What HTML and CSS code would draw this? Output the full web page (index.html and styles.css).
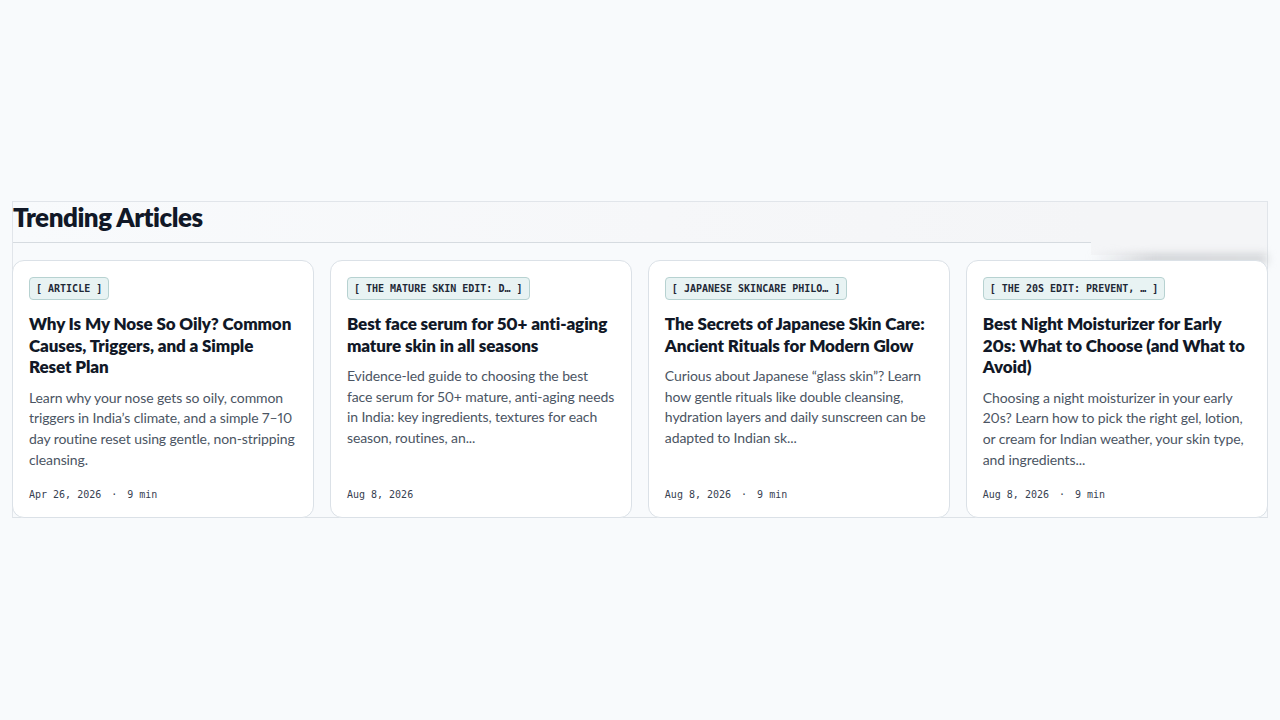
FILE: index.html
```html
<!DOCTYPE html>
<html lang="en">
<head>
<meta charset="utf-8">
<title>Trending Articles</title>
<link rel="stylesheet" href="styles.css">
</head>
<body>
<section class="trending">
  <header class="trending-head">
    <h2 class="trending-title">Trending Articles</h2>
  </header>
  <div class="edge-fade" aria-hidden="true"></div>
  <div class="card-row">
    <article class="card">
      <span class="chip">[ ARTICLE ]</span>
      <h3 class="card-title">Why Is My Nose So Oily? Common Causes, Triggers, and a Simple Reset Plan</h3>
      <p class="card-desc">Learn why your nose gets so oily, common triggers in India’s climate, and a simple 7–10 day routine reset using gentle, non-stripping cleansing.</p>
      <div class="card-meta"><span>Apr 26, 2026</span><span class="sep">·</span><span>9 min</span></div>
    </article>
    <article class="card">
      <span class="chip">[ THE MATURE SKIN EDIT: D… ]</span>
      <h3 class="card-title">Best face serum for 50+ anti-aging mature skin in all seasons</h3>
      <p class="card-desc">Evidence-led guide to choosing the best face serum for 50+ mature, anti-aging needs in India: key ingredients, textures for each season, routines, an...</p>
      <div class="card-meta"><span>Aug 8, 2026</span></div>
    </article>
    <article class="card">
      <span class="chip">[ JAPANESE SKINCARE PHILO… ]</span>
      <h3 class="card-title">The Secrets of Japanese Skin Care: Ancient Rituals for Modern Glow</h3>
      <p class="card-desc">Curious about Japanese “glass skin”? Learn how gentle rituals like double cleansing, hydration layers and daily sunscreen can be adapted to Indian sk...</p>
      <div class="card-meta"><span>Aug 8, 2026</span><span class="sep">·</span><span>9 min</span></div>
    </article>
    <article class="card">
      <span class="chip">[ THE 20S EDIT: PREVENT, … ]</span>
      <h3 class="card-title">Best Night Moisturizer for Early 20s: What to Choose (and What to Avoid)</h3>
      <p class="card-desc">Choosing a night moisturizer in your early 20s? Learn how to pick the right gel, lotion, or cream for Indian weather, your skin type, and ingredients...</p>
      <div class="card-meta"><span>Aug 8, 2026</span><span class="sep">·</span><span>9 min</span></div>
    </article>
  </div>
</section>
</body>
</html>
```
FILE: styles.css
```css
* {
  box-sizing: border-box;
}

body {
  margin: 0;
  padding: 201px 12px 0;
  background: #f8fafc;
  font-family: Lato, "Noto Sans", sans-serif;
  color: #111827;
}

.trending {
  position: relative;
  border: 1px solid #e1e5ea;
  border-bottom-color: #dde2e7;
}

.trending-head {
  margin-right: 175px;
  height: 41px;
  border-bottom: 1px solid #d6dbe0;
  background: linear-gradient(90deg, #f8fafc 0%, #f6f7f9 60%, #f4f5f7 100%);
}

.trending-title {
  margin: 0;
  font-size: 26px;
  font-weight: 800;
  letter-spacing: -0.5px;
  line-height: 31px;
  color: #111827;
}

.edge-fade {
  position: absolute;
  top: 0;
  right: 0;
  width: 176px;
  height: 53px;
  background: #f4f5f7;
  pointer-events: none;
}

.edge-fade::after {
  content: "";
  position: absolute;
  left: 0;
  right: 0;
  top: 52px;
  height: 10px;
  background: linear-gradient(90deg, rgba(200, 202, 206, 0) 0%, rgba(200, 202, 206, 0.9) 35%, rgba(205, 207, 210, 0.9) 100%);
  filter: blur(4px);
}

.card-row {
  display: grid;
  grid-template-columns: repeat(4, 1fr);
  gap: 15.7px;
  margin: 17px -1px -1px -1px;
  position: relative;
}

.card {
  display: flex;
  flex-direction: column;
  height: 258px;
  padding: 16px 16px 16px;
  background: #ffffff;
  border: 1px solid #dbe1e7;
  border-radius: 12px;
}

.chip {
  align-self: flex-start;
  height: 23px;
  padding: 0 6px;
  display: inline-flex;
  align-items: center;
  background: #e8f3f3;
  border: 1px solid #b7d2d1;
  border-radius: 4px;
  font-family: "DejaVu Sans Mono", "Liberation Mono", monospace;
  font-size: 10px;
  font-weight: 700;
  color: #1f2937;
  white-space: pre;
}

.card-title {
  margin: 13px 0 0;
  font-size: 17px;
  font-weight: 800;
  line-height: 21.5px;
  letter-spacing: -0.1px;
  font-variant-numeric: proportional-nums;
  color: #111827;
}

.card-desc {
  margin: 10px 0 0;
  font-size: 14px;
  line-height: 20.7px;
  letter-spacing: -0.1px;
  font-variant-numeric: proportional-nums;
  color: #4b5563;
}

.card-meta {
  margin-top: auto;
  display: flex;
  gap: 10px;
  font-family: "DejaVu Sans Mono", "Liberation Mono", monospace;
  font-size: 10px;
  line-height: 13px;
  color: #374151;
}
```
